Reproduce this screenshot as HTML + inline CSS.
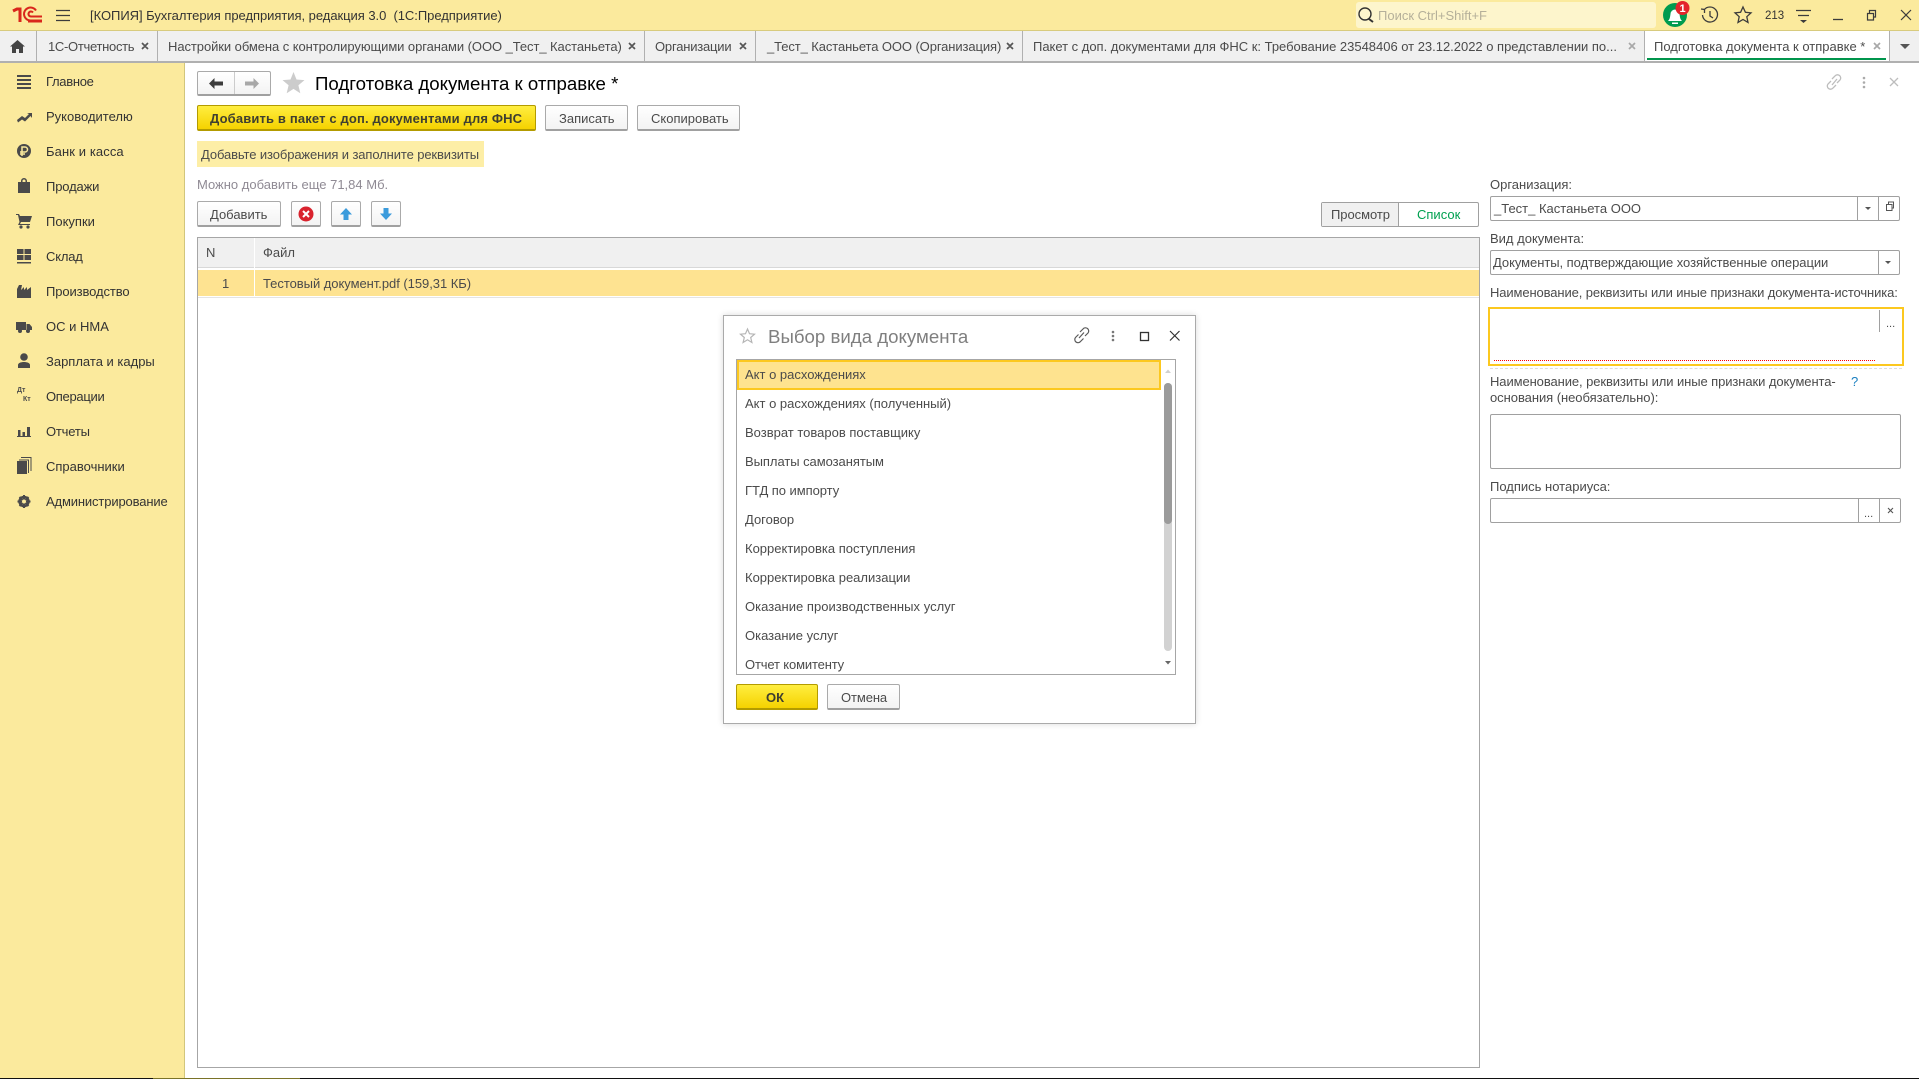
<!DOCTYPE html>
<html lang="ru"><head><meta charset="utf-8"><title>Подготовка документа к отправке</title>
<style>
html,body{margin:0;padding:0;width:1919px;height:1079px;overflow:hidden;background:#fff;}
body{position:relative;font-family:"Liberation Sans",Arial,sans-serif;font-size:13px;color:#4b4b4b;}
.a{position:absolute;box-sizing:border-box;}
.t{position:absolute;white-space:nowrap;line-height:16px;height:16px;}
.btn{position:absolute;box-sizing:border-box;border:1px solid #aaa;border-bottom:2px solid #a0a0a0;border-radius:2px;background:linear-gradient(#fff,#f3f3f3);}
.y{border-color:#b39b00;background:linear-gradient(#ffee40,#f5d200);}
.f{position:absolute;box-sizing:border-box;border:1px solid #a0a0a0;border-radius:2px;background:#fff;}
.s{color:#333;}
</style></head><body>
<!-- title bar -->
<div class="a" style="left:0;top:0;width:1919px;height:31px;background:#fbea9d;border-bottom:1px solid #d8cb7e;"></div>
<div class="t" style="left:90px;top:8px;width:420px;color:#333;letter-spacing:-.04px;">[КОПИЯ] Бухгалтерия предприятия, редакция 3.0&nbsp; (1С:Предприятие)</div>
<div class="a" style="left:1356px;top:2px;width:300px;height:26px;background:#fdf5cc;border-radius:3px;"></div>
<div class="t" style="left:1378px;top:8px;color:#b5b09a;">Поиск Ctrl+Shift+F</div>
<div class="t" style="left:1765px;top:8px;font-size:11.5px;color:#333;">213</div>
<!-- tab strip -->
<div class="a" style="left:0;top:31px;width:1919px;height:32px;background:#f0f0f0;border-bottom:2px solid #b0b0b0;"></div>
<div class="a" style="left:1645px;top:31px;width:244px;height:30px;background:#fff;"></div>
<div class="a" style="left:36px;top:31px;width:1px;height:31px;background:#b0b0b0;"></div>
<div class="a" style="left:157px;top:31px;width:1px;height:31px;background:#b0b0b0;"></div>
<div class="a" style="left:644px;top:31px;width:1px;height:31px;background:#b0b0b0;"></div>
<div class="a" style="left:755px;top:31px;width:1px;height:31px;background:#b0b0b0;"></div>
<div class="a" style="left:1022px;top:31px;width:1px;height:31px;background:#b0b0b0;"></div>
<div class="a" style="left:1644px;top:31px;width:1px;height:31px;background:#b0b0b0;"></div>
<div class="a" style="left:1889px;top:31px;width:1px;height:31px;background:#b0b0b0;"></div>
<div class="a" style="left:1647px;top:58px;width:239px;height:2px;background:#00954c;"></div>
<div class="t" style="left:48px;top:39px;letter-spacing:-.3px;">1С-Отчетность</div>
<div class="t" style="left:168px;top:39px;letter-spacing:-.07px;">Настройки обмена с контролирующими органами (ООО _Тест_ Кастаньета)</div>
<div class="t" style="left:655px;top:39px;letter-spacing:-.2px;">Организации</div>
<div class="t" style="left:767px;top:39px;letter-spacing:-.1px;">_Тест_ Кастаньета ООО (Организация)</div>
<div class="t" style="left:1033px;top:39px;letter-spacing:-.015px;">Пакет с доп. документами для ФНС к: Требование 23548406 от 23.12.2022 о представлении по...</div>
<div class="t" style="left:1654px;top:39px;">Подготовка документа к отправке *</div>
<!-- sidebar -->
<div class="a" style="left:0;top:63px;width:185px;height:1015px;background:#fbea9d;border-right:1px solid #d2c67c;"></div>
<div class="t s" style="left:46px;top:74px;letter-spacing:-.3px;">Главное</div>
<div class="t s" style="left:46px;top:109px;">Руководителю</div>
<div class="t s" style="left:46px;top:144px;letter-spacing:.1px;">Банк и касса</div>
<div class="t s" style="left:46px;top:179px;letter-spacing:-.15px;">Продажи</div>
<div class="t s" style="left:46px;top:214px;">Покупки</div>
<div class="t s" style="left:46px;top:249px;letter-spacing:-.2px;">Склад</div>
<div class="t s" style="left:46px;top:284px;letter-spacing:-.1px;">Производство</div>
<div class="t s" style="left:46px;top:319px;">ОС и НМА</div>
<div class="t s" style="left:46px;top:354px;">Зарплата и кадры</div>
<div class="t s" style="left:46px;top:389px;letter-spacing:-.3px;">Операции</div>
<div class="t s" style="left:46px;top:424px;letter-spacing:-.2px;">Отчеты</div>
<div class="t s" style="left:46px;top:459px;">Справочники</div>
<div class="t s" style="left:46px;top:494px;letter-spacing:-.14px;">Администрирование</div>
<div class="t" style="left:17px;top:387px;font-size:7px;font-weight:bold;line-height:8px;height:8px;color:#4b4b4b;">Дт</div>
<div class="t" style="left:23px;top:396px;font-size:7px;font-weight:bold;line-height:8px;height:8px;color:#4b4b4b;">Кт</div>
<!-- content header -->
<div class="btn" style="left:197px;top:71px;width:74px;height:25px;"></div>
<div class="a" style="left:234px;top:72px;width:1px;height:22px;background:#ccc;"></div>
<div class="t" style="left:315px;top:75px;font-size:18.67px;line-height:18px;height:18px;color:#000;">Подготовка документа к отправке *</div>
<div class="btn y" style="left:197px;top:105px;width:339px;height:26px;"></div>
<div class="t" style="left:210px;top:111px;font-weight:bold;color:#3f3f30;letter-spacing:.15px;">Добавить в пакет с доп. документами для ФНС</div>
<div class="btn" style="left:545px;top:105px;width:83px;height:26px;"></div>
<div class="t" style="left:559px;top:111px;">Записать</div>
<div class="btn" style="left:637px;top:105px;width:103px;height:26px;"></div>
<div class="t" style="left:651px;top:111px;">Скопировать</div>
<div class="a" style="left:197px;top:141px;width:287px;height:26px;background:#fdeea6;"></div>
<div class="t" style="left:201px;top:147px;letter-spacing:-.11px;">Добавьте изображения и заполните реквизиты</div>
<div class="t" style="left:197px;top:177px;color:#8f8a94;">Можно добавить еще 71,84 Мб.</div>
<div class="btn" style="left:197px;top:201px;width:84px;height:26px;"></div>
<div class="t" style="left:210px;top:207px;">Добавить</div>
<div class="btn" style="left:291px;top:201px;width:30px;height:26px;"></div>
<div class="btn" style="left:331px;top:201px;width:30px;height:26px;"></div>
<div class="btn" style="left:371px;top:201px;width:30px;height:26px;"></div>
<div class="a" style="left:1321px;top:202px;width:158px;height:25px;border:1px solid #a0a0a0;border-radius:2px;background:#fff;"></div>
<div class="a" style="left:1322px;top:203px;width:77px;height:23px;background:#f0f0f0;border-right:1px solid #a0a0a0;"></div>
<div class="t" style="left:1331px;top:207px;letter-spacing:-.05px;">Просмотр</div>
<div class="t" style="left:1417px;top:207px;color:#00a050;">Список</div>
<!-- table -->
<div class="a" style="left:197px;top:237px;width:1283px;height:831px;border:1px solid #a6a6a6;background:#fff;"></div>
<div class="a" style="left:198px;top:238px;width:1281px;height:30px;background:#f0f0f0;border-bottom:1px solid #d8d8d8;"></div>
<div class="a" style="left:198px;top:270px;width:1281px;height:26px;background:#fee391;"></div>
<div class="a" style="left:198px;top:297px;width:1281px;height:1px;background:#e4e4e4;"></div>
<div class="a" style="left:254px;top:238px;width:1px;height:58px;background:#fff;"></div>
<div class="t" style="left:206px;top:245px;">N</div>
<div class="t" style="left:263px;top:245px;">Файл</div>
<div class="t" style="left:222px;top:276px;">1</div>
<div class="t" style="left:263px;top:276px;letter-spacing:-.04px;">Тестовый документ.pdf (159,31 КБ)</div>
<!-- right panel -->
<div class="t" style="left:1490px;top:177px;">Организация:</div>
<div class="f" style="left:1490px;top:196px;width:410px;height:25px;"></div>
<div class="a" style="left:1857px;top:197px;width:1px;height:23px;background:#a0a0a0;"></div>
<div class="a" style="left:1878px;top:197px;width:1px;height:23px;background:#a0a0a0;"></div>
<div class="t" style="left:1494px;top:201px;">_Тест_ Кастаньета ООО</div>
<div class="t" style="left:1490px;top:231px;">Вид документа:</div>
<div class="f" style="left:1490px;top:250px;width:410px;height:25px;"></div>
<div class="a" style="left:1878px;top:251px;width:1px;height:23px;background:#a0a0a0;"></div>
<div class="t" style="left:1493px;top:255px;letter-spacing:-.05px;">Документы, подтверждающие хозяйственные операции</div>
<div class="t" style="left:1490px;top:285px;letter-spacing:-.115px;">Наименование, реквизиты или иные признаки документа-источника:</div>
<div class="a" style="left:1488px;top:307px;width:416px;height:59px;border:2px solid #fcc81f;background:#fff;"></div>
<div class="a" style="left:1879px;top:310px;width:1px;height:22px;background:#a0a0a0;"></div>
<div class="t" style="left:1886px;top:316px;font-size:11px;">...</div>
<div class="a" style="left:1494px;top:360px;width:381px;height:1px;border-top:1px dotted #f00;"></div>
<div class="a" style="left:1490px;top:368px;width:412px;height:1px;border-top:1px dashed #ddd;"></div>
<div class="t" style="left:1490px;top:374px;letter-spacing:-.09px;">Наименование, реквизиты или иные признаки документа-</div>
<div class="t" style="left:1490px;top:390px;letter-spacing:-.05px;">основания (необязательно):</div>
<div class="t" style="left:1851px;top:374px;color:#1a7fc0;">?</div>
<div class="f" style="left:1490px;top:414px;width:411px;height:55px;"></div>
<div class="t" style="left:1490px;top:479px;">Подпись нотариуса:</div>
<div class="f" style="left:1490px;top:498px;width:411px;height:25px;"></div>
<div class="a" style="left:1858px;top:499px;width:1px;height:23px;background:#a0a0a0;"></div>
<div class="a" style="left:1879px;top:499px;width:1px;height:23px;background:#a0a0a0;"></div>
<div class="t" style="left:1864px;top:506px;font-size:11px;">...</div>
<!-- dialog -->
<div class="a" style="left:723px;top:315px;width:473px;height:409px;background:#fff;border:1px solid #aaa;box-shadow:0 0 6px rgba(0,0,0,.15);"></div>
<div class="t" style="left:768px;top:328px;font-size:18.67px;line-height:18px;height:18px;color:#7f7f7f;">Выбор вида документа</div>
<div class="a" style="left:736px;top:359px;width:440px;height:316px;border:1px solid #a6a6a6;background:#fff;overflow:hidden;">
  <div class="a" style="left:0;top:0;width:424px;height:30px;background:#fee38f;border:2px solid #fcc81f;"></div>
  <div class="t" style="left:8px;top:7px;">Акт о расхождениях</div>
  <div class="t" style="left:8px;top:36px;">Акт о расхождениях (полученный)</div>
  <div class="t" style="left:8px;top:65px;">Возврат товаров поставщику</div>
  <div class="t" style="left:8px;top:94px;letter-spacing:-.05px;">Выплаты самозанятым</div>
  <div class="t" style="left:8px;top:123px;letter-spacing:-.05px;">ГТД по импорту</div>
  <div class="t" style="left:8px;top:152px;">Договор</div>
  <div class="t" style="left:8px;top:181px;">Корректировка поступления</div>
  <div class="t" style="left:8px;top:210px;">Корректировка реализации</div>
  <div class="t" style="left:8px;top:239px;letter-spacing:.03px;">Оказание производственных услуг</div>
  <div class="t" style="left:8px;top:268px;">Оказание услуг</div>
  <div class="t" style="left:8px;top:297px;letter-spacing:-.15px;">Отчет комитенту</div>
  <div class="a" style="left:427px;top:23px;width:8px;height:268px;background:#d2d2d2;border-radius:4px;"></div>
  <div class="a" style="left:427px;top:23px;width:8px;height:141px;background:#9b9b9b;border-radius:4px;"></div>
</div>
<div class="btn y" style="left:736px;top:684px;width:82px;height:26px;"></div>
<div class="t" style="left:766px;top:690px;font-weight:bold;color:#3f3f30;">ОК</div>
<div class="btn" style="left:827px;top:684px;width:73px;height:26px;"></div>
<div class="t" style="left:841px;top:690px;letter-spacing:-.1px;">Отмена</div>
<!-- bottom line -->
<div class="a" style="left:0;top:1078px;width:1919px;height:1px;background:#111;"></div>
<div class="a" style="left:153px;top:1078px;width:147px;height:1px;background:#7a7328;"></div>
<!-- icons -->
<svg class="a" style="left:0;top:0;" width="1919" height="1079" viewBox="0 0 1919 1079" xmlns="http://www.w3.org/2000/svg">
<!-- logo -->
<g fill="none" stroke="#d9261c" stroke-width="2">
<path d="M13 11l4-2h3v13" stroke-width="3"/>
<path d="M42 20.500H31a6.500 6.500 0 1 1 5-10"/><path d="M42 16.500H31a2.500 2.500 0 1 1 2-4"/><path d="M28 21.500h14"/>
</g>
<!-- hamburger -->
<path d="M56 10.500h14M56 15.500h14M56 20.500h14" stroke="#3c3c3c" stroke-width="1.300"/>
<!-- search -->
<circle cx="1365" cy="14" r="6" fill="none" stroke="#333" stroke-width="1.400"/><path d="M1369 19l4 3" stroke="#333" stroke-width="2"/>
<!-- bell -->
<circle cx="1675" cy="15" r="12" fill="#009b4f"/>
<path d="M1668 21c2-2 2-4 2.500-7a4.500 4.500 0 0 1 9 0c.5 3 .5 5 2.500 7z" fill="#fff"/><rect x="1672" y="22.500" width="6" height="1.500" fill="#fff"/>
<circle cx="1682.500" cy="8" r="7" fill="#e3242b"/>
<text x="1682.500" y="12" text-anchor="middle" font-family="Liberation Sans" font-weight="bold" font-size="11" fill="#fff">1</text>
<!-- history -->
<path d="M1704 10a7.500 7.500 0 1 1-1.500 5" fill="none" stroke="#3c3c3c" stroke-width="1.300"/><path d="M1701 9l3.500 .5v3.500" fill="none" stroke="#3c3c3c" stroke-width="1.300"/><path d="M1710 11v5l3 2" fill="none" stroke="#3c3c3c" stroke-width="1.300"/>
<!-- star -->
<path d="M1743 7l2.400 5.300 5.600.6-4.200 3.800 1.200 5.700-5-2.900-5 2.900 1.200-5.700-4.200-3.800 5.600-.6z" fill="none" stroke="#3c3c3c" stroke-width="1.300"/>
<!-- list -->
<path d="M1796 10.500h15M1798 15.500h11" stroke="#3c3c3c" stroke-width="1.200"/><path d="M1800 20h7l-3.500 3z" fill="#3c3c3c"/>
<!-- window -->
<path d="M1833 19.500h10" stroke="#3c3c3c" stroke-width="1.300"/>
<path d="M1867.500 13.500h6v6.500h-6zM1869.500 13v-2.500h6v6.500h-2" fill="none" stroke="#3c3c3c" stroke-width="1.200"/>
<path d="M1901 10l10 10M1911 10l-10 10" stroke="#3c3c3c" stroke-width="1.200"/>
<!-- home -->
<path d="M17.500 40l-7.500 6.500h2v6.500h4v-4h3v4h4v-6.500h2z" fill="#444"/>
<!-- tab closes -->
<g stroke="#555" stroke-width="1.700">
<path d="M142 43l6 6M148 43l-6 6M629 43l6 6M635 43l-6 6M740 43l6 6M746 43l-6 6M1007 43l6 6M1013 43l-6 6"/></g>
<g stroke="#a8a8a8" stroke-width="1.700"><path d="M1629 43l6 6M1635 43l-6 6M1874 43l6 6M1880 43l-6 6"/></g>
<path d="M1900 44h10l-5 5z" fill="#555"/>
<!-- sidebar icons -->
<g fill="#4a4a4a">
<path d="M17 75h14v2H17zM17 79h14v2H17zM17 83h14v2H17zM17 87h14v2H17z"/>
<path d="M17 120l5-4 3 2 4-4-2-1h5v5l-1.500-2-5.500 5.500-3-2-4 3z"/>
<circle cx="24" cy="151" r="7"/>
<path d="M18 182h12v11H18z"/><path d="M21 182v-1a3 3 0 0 1 6 0v1h-1.500v-1a1.500 1.500 0 0 0-3 0v1z"/>
<path d="M16 214h3l1 2h12l-2 6H21l-1 2h10v1H18l1.500-3L18 215h-2z"/><circle cx="21" cy="227" r="1.600"/><circle cx="28" cy="227" r="1.600"/>
<path d="M17 249h6.500v5H17zM24.500 249H31v5h-6.500zM17 255h6.500v5H17zM24.500 255H31v5h-6.500zM17 262h14v1.500H17z"/>
<path d="M17 298v-9l2-4h3l-1 5 3-3v3l3-3v3l4-3v11z"/>
<path d="M16 322h10v8H16zM26.500 324h3l2.500 3v3h-5.500z"/><circle cx="20" cy="331" r="2"/><circle cx="28" cy="331" r="2"/>
<circle cx="24" cy="357" r="3.800"/><path d="M18 368v-3c0-2 3-3 6-3s6 1 6 3v3z"/>
<path d="M18 430h2.500v6H18zM22.500 432h2.500v4h-2.500zM27 427h3v9h-3zM17 436h14v1H17z"/>
<path d="M17 461h10v13H17z"/><path d="M28 473v-12.500H19v-1h10V473zM30.500 471V458H21v-1h10.500v14z"/>
<circle cx="24" cy="501.500" r="4.500" fill="none" stroke="#4a4a4a" stroke-width="2.500"/>
<path d="M24 495v13M17.500 501.500h13M19.500 497l9 9M28.500 497l-9 9" stroke="#4a4a4a" stroke-width="2"/>
<circle cx="24" cy="501.500" r="2" fill="#fbea9d"/>
</g>
<path d="M22 156v-9h3a2.500 2.500 0 0 1 0 5h-5M20 154h5" fill="none" stroke="#fbea9d" stroke-width="1.500"/>
<!-- nav arrows -->
<path d="M209 83.500l5.500-5.500v3.500h8.500v4h-8.500v3.500z" fill="#3c3c3c"/>
<path d="M259 83.500l-5.500-5.500v3.500H245v4h8.500v3.500z" fill="#a8a8a8"/>
<!-- big star -->
<path d="M293.500 72l3 7.500 8 .6-6.100 5.200 1.900 7.900-6.800-4.300-6.800 4.300 1.900-7.900-6.100-5.200 8-.6z" fill="#ccc"/>
<!-- top-right form icons -->
<g fill="none" stroke="#bdbdbd" stroke-width="1.300"><path d="M1832 79l3-3a3 3 0 0 1 5 4l-3 3M1836 85l-3 3a3 3 0 0 1-5-4l3-3M1832 85l5-6"/>
<path d="M1890 78l8 8M1898 78l-8 8"/></g>
<g fill="#aaa"><circle cx="1864" cy="78" r="1.300"/><circle cx="1864" cy="82.500" r="1.300"/><circle cx="1864" cy="87" r="1.300"/></g>
<!-- toolbar icons -->
<circle cx="306" cy="214" r="7.500" fill="#d9232e"/><path d="M303 211l6 6M309 211l-6 6" stroke="#fff" stroke-width="2"/>
<path d="M346 208l-6 6.500h3.500v5.500h5v-5.500h3.500z" fill="#3a9bdc"/>
<path d="M386 220l-6-6.500h3.500V208h5v5.500h3.500z" fill="#3a9bdc"/>
<!-- field glyphs -->
<path d="M1865 207h6l-3 3z" fill="#555"/>
<path d="M1886 261h6l-3 3z" fill="#555" transform="translate(-1 0)"/>
<path d="M1886.500 204.500h5.500v6h-5.500zM1888.500 204v-2h5v6h-1" fill="none" stroke="#555" stroke-width="1"/>
<path d="M1888 508l5 5M1893 508l-5 5" stroke="#555" stroke-width="1.100"/>
<!-- dialog icons -->
<path d="M747.500 329l2 4.700 5 .5-3.800 3.300 1.200 5-4.400-2.700-4.400 2.700 1.200-5-3.800-3.300 5-.5z" fill="none" stroke="#b5b5b5" stroke-width="1.200"/>
<g fill="none" stroke="#5a5a5a" stroke-width="1.200"><path d="M1080 332l3-3a3 3 0 0 1 5 4l-3 3M1083.500 338.500l-3 3a3 3 0 0 1-5-4l3-3M1079 338l5-5.500"/>
<rect x="1140.500" y="332.500" width="8" height="8" stroke="#333" stroke-width="1.300"/>
<path d="M1170 331l9.500 9.500M1179.500 331l-9.500 9.500" stroke="#333"/></g>
<g fill="#777"><circle cx="1113" cy="332" r="1.300"/><circle cx="1113" cy="336" r="1.300"/><circle cx="1113" cy="340" r="1.300"/></g>
<path d="M1165 373l3-3.500 3 3.500z" fill="#d0d0d0"/>
<path d="M1165 661l3 3.500 3-3.500z" fill="#666"/>
</svg>
</body></html>
